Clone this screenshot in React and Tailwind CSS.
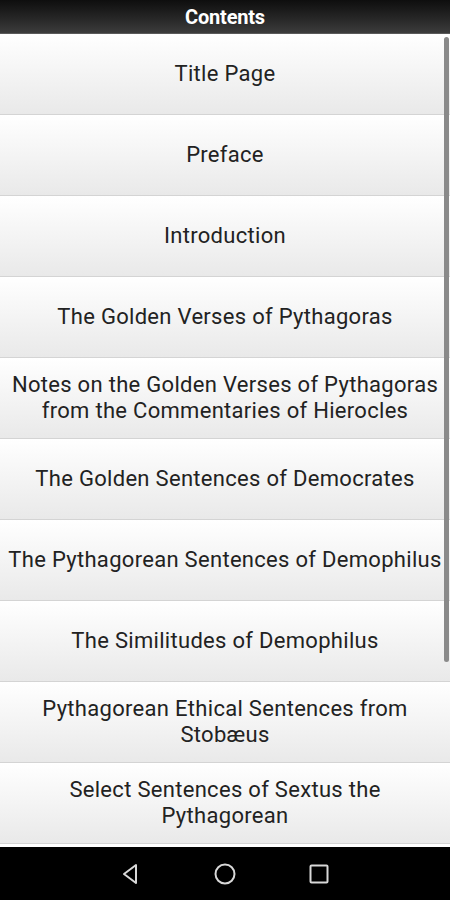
import React from 'react'

const items = [
  ['Title Page'],
  ['Preface'],
  ['Introduction'],
  ['The Golden Verses of Pythagoras'],
  ['Notes on the Golden Verses of Pythagoras', 'from the Commentaries of Hierocles'],
  ['The Golden Sentences of Democrates'],
  ['The Pythagorean Sentences of Demophilus'],
  ['The Similitudes of Demophilus'],
  ['Pythagorean Ethical Sentences from', 'Stobæus'],
  ['Select Sentences of Sextus the', 'Pythagorean'],
]

export default function App() {
  return (
    <div className="w-[450px] h-[900px] flex flex-col bg-white overflow-hidden" style={{ fontFamily: 'Roboto, "Noto Sans", sans-serif' }}>
      {/* Header */}
      <div className="h-[34px] shrink-0 flex items-center justify-center bg-gradient-to-b from-[#0e0e0e] to-[#3c3c3c] border-b border-[#5a5a5a]">
        <span className="text-white text-[20px] font-bold tracking-[-0.2px]">Contents</span>
      </div>

      {/* List */}
      <div className="relative flex-1 overflow-hidden">
        <div className="flex flex-col">
          {items.map((lines, i) => (
            <div
              key={i}
              className="h-[81px] shrink-0 flex flex-col items-center justify-center border-b border-[#d4d4d4] bg-gradient-to-b from-white to-[#e9e9e9] text-[#222] text-[22px] leading-[26px] tracking-[0.3px] text-center"
            >
              {lines.map((l, j) => (
                <span key={j} className="whitespace-nowrap">{l}</span>
              ))}
            </div>
          ))}
        </div>
        {/* Scrollbar */}
        <div className="absolute right-[1px] top-[3px] w-[5px] h-[625px] rounded-full bg-[#8a8a8a]" />
      </div>

      {/* Nav bar */}
      <div className="h-[53px] shrink-0 bg-black flex items-center justify-center gap-[70px]">
        <svg width="24" height="24" viewBox="0 0 24 24" fill="none" stroke="#d8d8d8" strokeWidth="2" strokeLinejoin="round">
          <path d="M17 3 L17 21 L5 12 Z" />
        </svg>
        <svg width="24" height="24" viewBox="0 0 24 24" fill="none" stroke="#d8d8d8" strokeWidth="2">
          <circle cx="12" cy="12" r="9.5" />
        </svg>
        <svg width="24" height="24" viewBox="0 0 24 24" fill="none" stroke="#d8d8d8" strokeWidth="2" strokeLinejoin="round">
          <rect x="3.5" y="3.5" width="17" height="17" rx="1" />
        </svg>
      </div>
    </div>
  )
}
